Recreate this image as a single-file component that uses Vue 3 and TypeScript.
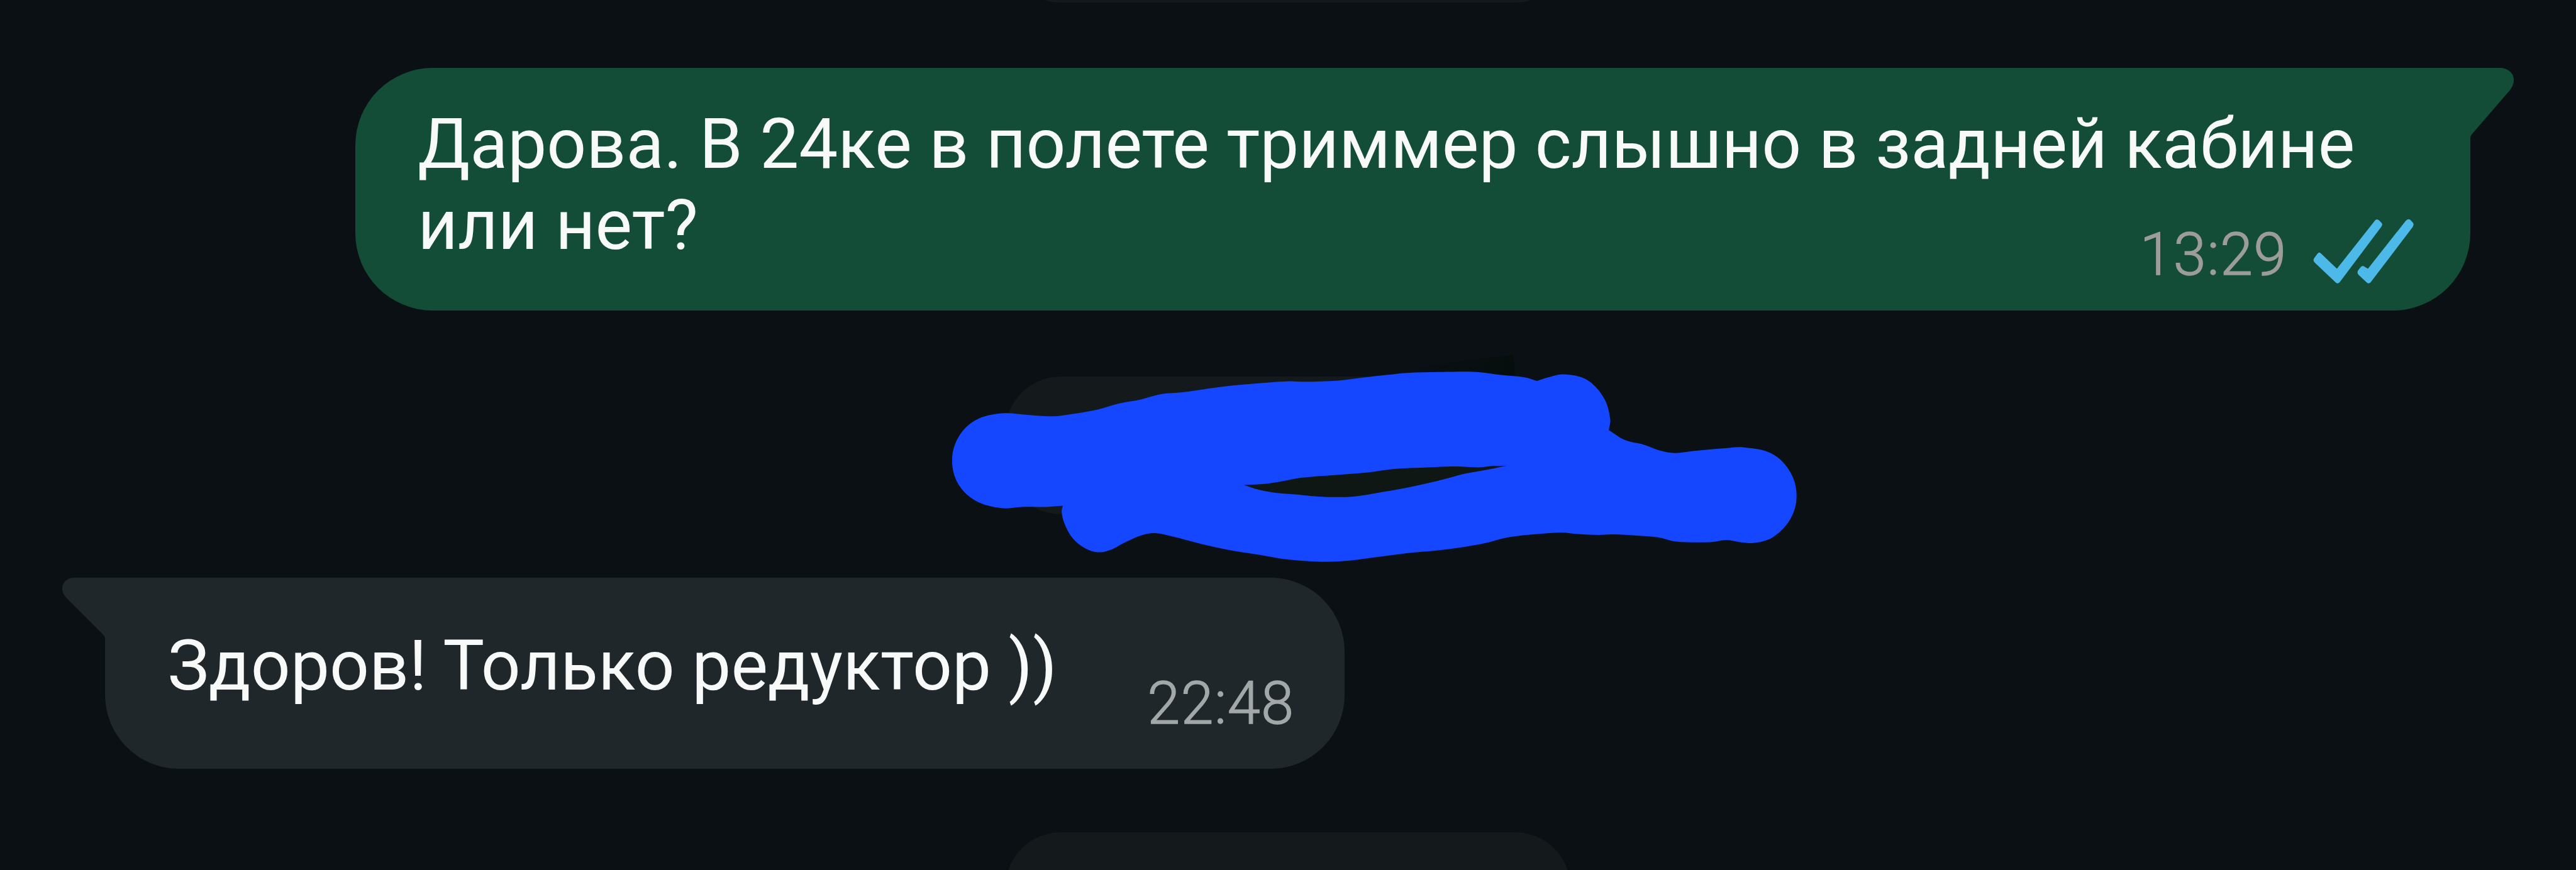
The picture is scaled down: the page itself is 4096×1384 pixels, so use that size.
<script setup lang="ts">
type Point = [number, number]

interface Message {
  id: number
  side: 'out' | 'in'
  lines: string[]
  time: string
  read?: boolean
}

const outgoing: Message = {
  id: 1,
  side: 'out',
  lines: ['Дарова. В 24ке в полете триммер слышно в задней кабине', 'или нет?'],
  time: '13:29',
  read: true,
}
const incoming: Message = {
  id: 2,
  side: 'in',
  lines: ['Здоров! Только редуктор ))'],
  time: '22:48',
}
const feed: (Message | null)[] = [null, outgoing, null, incoming, null]

function direction(a: Point, b: Point): Point {
  const len = Math.hypot(b[0] - a[0], b[1] - a[1]) || 1
  return [(b[0] - a[0]) / len, (b[1] - a[1]) / len]
}

/* Smooth open run through the points; handles scale with each chord. */
function run(pts: Point[]): string {
  const tangents = pts.map((p, i) => direction(pts[i - 1] ?? p, pts[i + 1] ?? p))
  let d = ''
  for (let i = 0; i < pts.length - 1; i++) {
    const [b, c] = [pts[i], pts[i + 1]]
    const [t, s] = [tangents[i], tangents[i + 1]]
    const h = Math.hypot(c[0] - b[0], c[1] - b[1]) / 2.9
    d += `C${b[0] + t[0] * h} ${b[1] + t[1] * h} ${c[0] - s[0] * h} ${c[1] - s[1] * h} ${c[0]} ${c[1]}`
  }
  return d
}

/* Consecutive runs share their end points, which stay sharp corners. */
function shape(runs: Point[][]): string {
  return `M${runs[0][0].join(' ')}${runs.map(run).join('')}Z`
}

const marker = shape([
  [
    [1782.5, 848.5], [1754, 850.5], [1713, 850.5], [1679, 852.5], [1636, 840], [1607, 812],
    [1596.7, 773], [1607, 734], [1636, 705], [1680, 693.5],
    [1723, 696], [1764, 698.5], [1795, 695], [1841, 687], [1876, 677], [1912, 670.5],
    [1948, 661], [1983.5, 658], [2019, 653], [2060, 647.5], [2111, 643], [2162, 639.5],
    [2187.5, 640.5], [2244, 638.5], [2284.5, 633.5], [2325, 629], [2360, 625.5], [2418, 624],
    [2476, 624], [2512, 628.5], [2556.5, 633], [2577.5, 639],
  ],
  [
    [2577.5, 639], [2596.6, 633], [2622, 628], [2661, 637], [2690, 668], [2700.5, 703.5],
    [2698, 721.5],
  ],
  [
    [2698, 721.5], [2726, 738.5], [2757, 746], [2784, 756], [2808.6, 760], [2842, 756.5],
    [2887, 752.5], [2925, 750.5], [2973, 762], [3003, 793], [3013, 832], [3003, 870],
    [2975, 900], [2945, 910.5], [2918, 909.5],
    [2896, 906], [2869, 909.5], [2811, 908.5], [2780, 901.5], [2744, 898.5], [2704, 896.5],
    [2681.5, 897.5], [2645.7, 896], [2619, 893.5], [2579, 896], [2529.6, 901.5],
    [2489.5, 911.5], [2449, 918.5], [2409, 923.5], [2360, 928], [2310, 934.5], [2264, 940.5],
    [2218, 942.5], [2162, 939], [2106, 930], [2060, 922.5], [2014, 912.5], [1968, 900.5],
    [1939, 894.5], [1918, 897], [1886.5, 910], [1861, 923], [1840.6, 926.5],
    [1820, 920], [1799, 903], [1785, 878], [1780.5, 858], [1782.5, 848.5],
  ],
])

const gap = shape([
  [
    [2086, 813.5], [2118, 812], [2146.7, 808], [2182.5, 801.5], [2238.6, 797],
    [2294.7, 792.5], [2335.5, 787], [2375, 785], [2440, 782.5], [2480.5, 784],
    [2507, 781.5], [2526, 781.5],
  ],
  [
    [2526, 781.5], [2494, 788], [2458, 794.5], [2418, 805], [2360, 818], [2315, 826],
    [2274, 832.5], [2238.6, 834], [2197.8, 832], [2172, 829.5], [2141.6, 827],
    [2111, 821.5], [2086, 813.5],
  ],
])
</script>

<template>
  <main class="chat">
    <template v-for="(item, i) in feed" :key="i">
      <div v-if="!item" class="pill"></div>
      <article v-else class="bubble" :class="item.side">
        <svg v-if="item.side === 'out'" class="tail" viewBox="0 0 75 118">
          <path d="M0 0H52C65 0 75 9 75 20C75 27 72 33 68 38L4 112Q2 115 2 118H0Z" />
        </svg>
        <svg v-else class="tail" viewBox="0 0 75 118">
          <path d="M75 0H21C9 0 1 8 1 18C1 24 3 28 7 33L70 96Q73 99 73 104V118H75Z" />
        </svg>
        <p class="text"><span v-for="line in item.lines" :key="line">{{ line }}</span></p>
        <footer class="meta">
          <time>{{ item.time }}</time>
          <svg v-if="item.read" class="ticks" viewBox="0 0 170 112">
            <path d="M14 59L41 85L104 5Q107 0 112 4L115 7Q119 10 115 15L46 107Q42 112 38 107L4 75Q0 71 3 67L8 60Q11 56 14 59Z" />
            <path d="M88 82L93 85L156 5Q160 0 164 3L168 7Q171 10 168 15L98 107Q94 112 90 107L77 95Q74 91 77 87L81 82Q84 79 88 82Z" />
          </svg>
        </footer>
      </article>
    </template>

    <svg class="scribble" viewBox="1580 580 1450 380">
      <defs>
        <linearGradient id="shade" x1="0" x2="1" y1="0" y2="0">
          <stop offset="0" stop-color="#060e0d" stop-opacity="0" />
          <stop offset="1" stop-color="#060e0d" />
        </linearGradient>
      </defs>
      <path d="M2340 619L2538 595L2542 640H2340Z" fill="url(#shade)" />
      <path :d="marker" fill="#1447ff" />
      <path :d="gap" fill="#0f1714" />
    </svg>
  </main>
</template>

<style>
html,
body {
  background: #0b1014;
  overflow: hidden;
}
</style>

<style scoped>
.chat {
  --u: calc(100vw / 4320);
  position: relative;
  display: flex;
  flex-direction: column;
  height: 100vh;
  overflow: hidden;
  background: #0b1014;
  font-family: Roboto, "Noto Sans", sans-serif;
}

.pill {
  flex: none;
  align-self: center;
  width: calc(948 * var(--u));
  height: calc(231 * var(--u));
  border-radius: calc(92 * var(--u));
  background: #14191c;
}

.pill:first-child {
  margin-top: calc(-227 * var(--u));
}

.bubble {
  position: relative;
  flex: none;
  display: flex;
  justify-content: space-between;
  box-sizing: border-box;
  color: #f7faf9;
}

.bubble.out {
  align-self: flex-end;
  width: calc(3547 * var(--u));
  height: calc(406.5 * var(--u));
  margin: calc(110 * var(--u)) calc(177 * var(--u)) calc(111 * var(--u)) 0;
  padding: calc(61 * var(--u)) calc(95 * var(--u)) 0 calc(104.5 * var(--u));
  border-radius: calc(130 * var(--u)) 0 calc(130 * var(--u)) calc(130 * var(--u));
  background: #144d37;
}

.bubble.in {
  align-self: flex-start;
  width: calc(2079 * var(--u));
  height: calc(320.5 * var(--u));
  margin: calc(106.5 * var(--u)) 0 calc(106.5 * var(--u)) calc(176 * var(--u));
  padding: calc(82 * var(--u)) calc(84 * var(--u)) 0 calc(105 * var(--u));
  border-radius: 0 calc(124 * var(--u)) calc(124 * var(--u)) calc(124 * var(--u));
  background: #1f272a;
}

.tail {
  position: absolute;
  top: 0;
  width: calc(75 * var(--u));
  height: calc(118 * var(--u));
}

.out .tail {
  left: calc(100% - 2 * var(--u));
  fill: #144d37;
}

.in .tail {
  right: calc(100% - 2 * var(--u));
  fill: #1f272a;
}

.text {
  margin: 0;
  font-size: calc(116.5 * var(--u));
  line-height: calc(136 * var(--u));
  white-space: nowrap;
}

.in .text {
  letter-spacing: calc(0.1 * var(--u));
}

.text span {
  display: block;
}

.meta {
  display: flex;
  align-items: flex-start;
  font-size: calc(99 * var(--u));
  font-weight: 300;
  letter-spacing: calc(1.3 * var(--u));
  line-height: calc(116 * var(--u));
  color: #9c9d99;
  -webkit-text-stroke: calc(1.4 * var(--u)) currentColor;
}

.out .meta {
  margin-left: calc(-600 * var(--u));
  padding-top: calc(194 * var(--u));
}

.in .meta {
  padding-top: calc(71 * var(--u));
  color: #a2a7a8;
}

.ticks {
  width: calc(170 * var(--u));
  height: calc(112 * var(--u));
  margin: calc(-3 * var(--u)) 0 0 calc(42.5 * var(--u));
  fill: #4db9e8;
}

.scribble {
  position: absolute;
  left: calc(1580 * var(--u));
  top: calc(580 * var(--u));
  width: calc(1450 * var(--u));
  height: calc(380 * var(--u));
}
</style>
